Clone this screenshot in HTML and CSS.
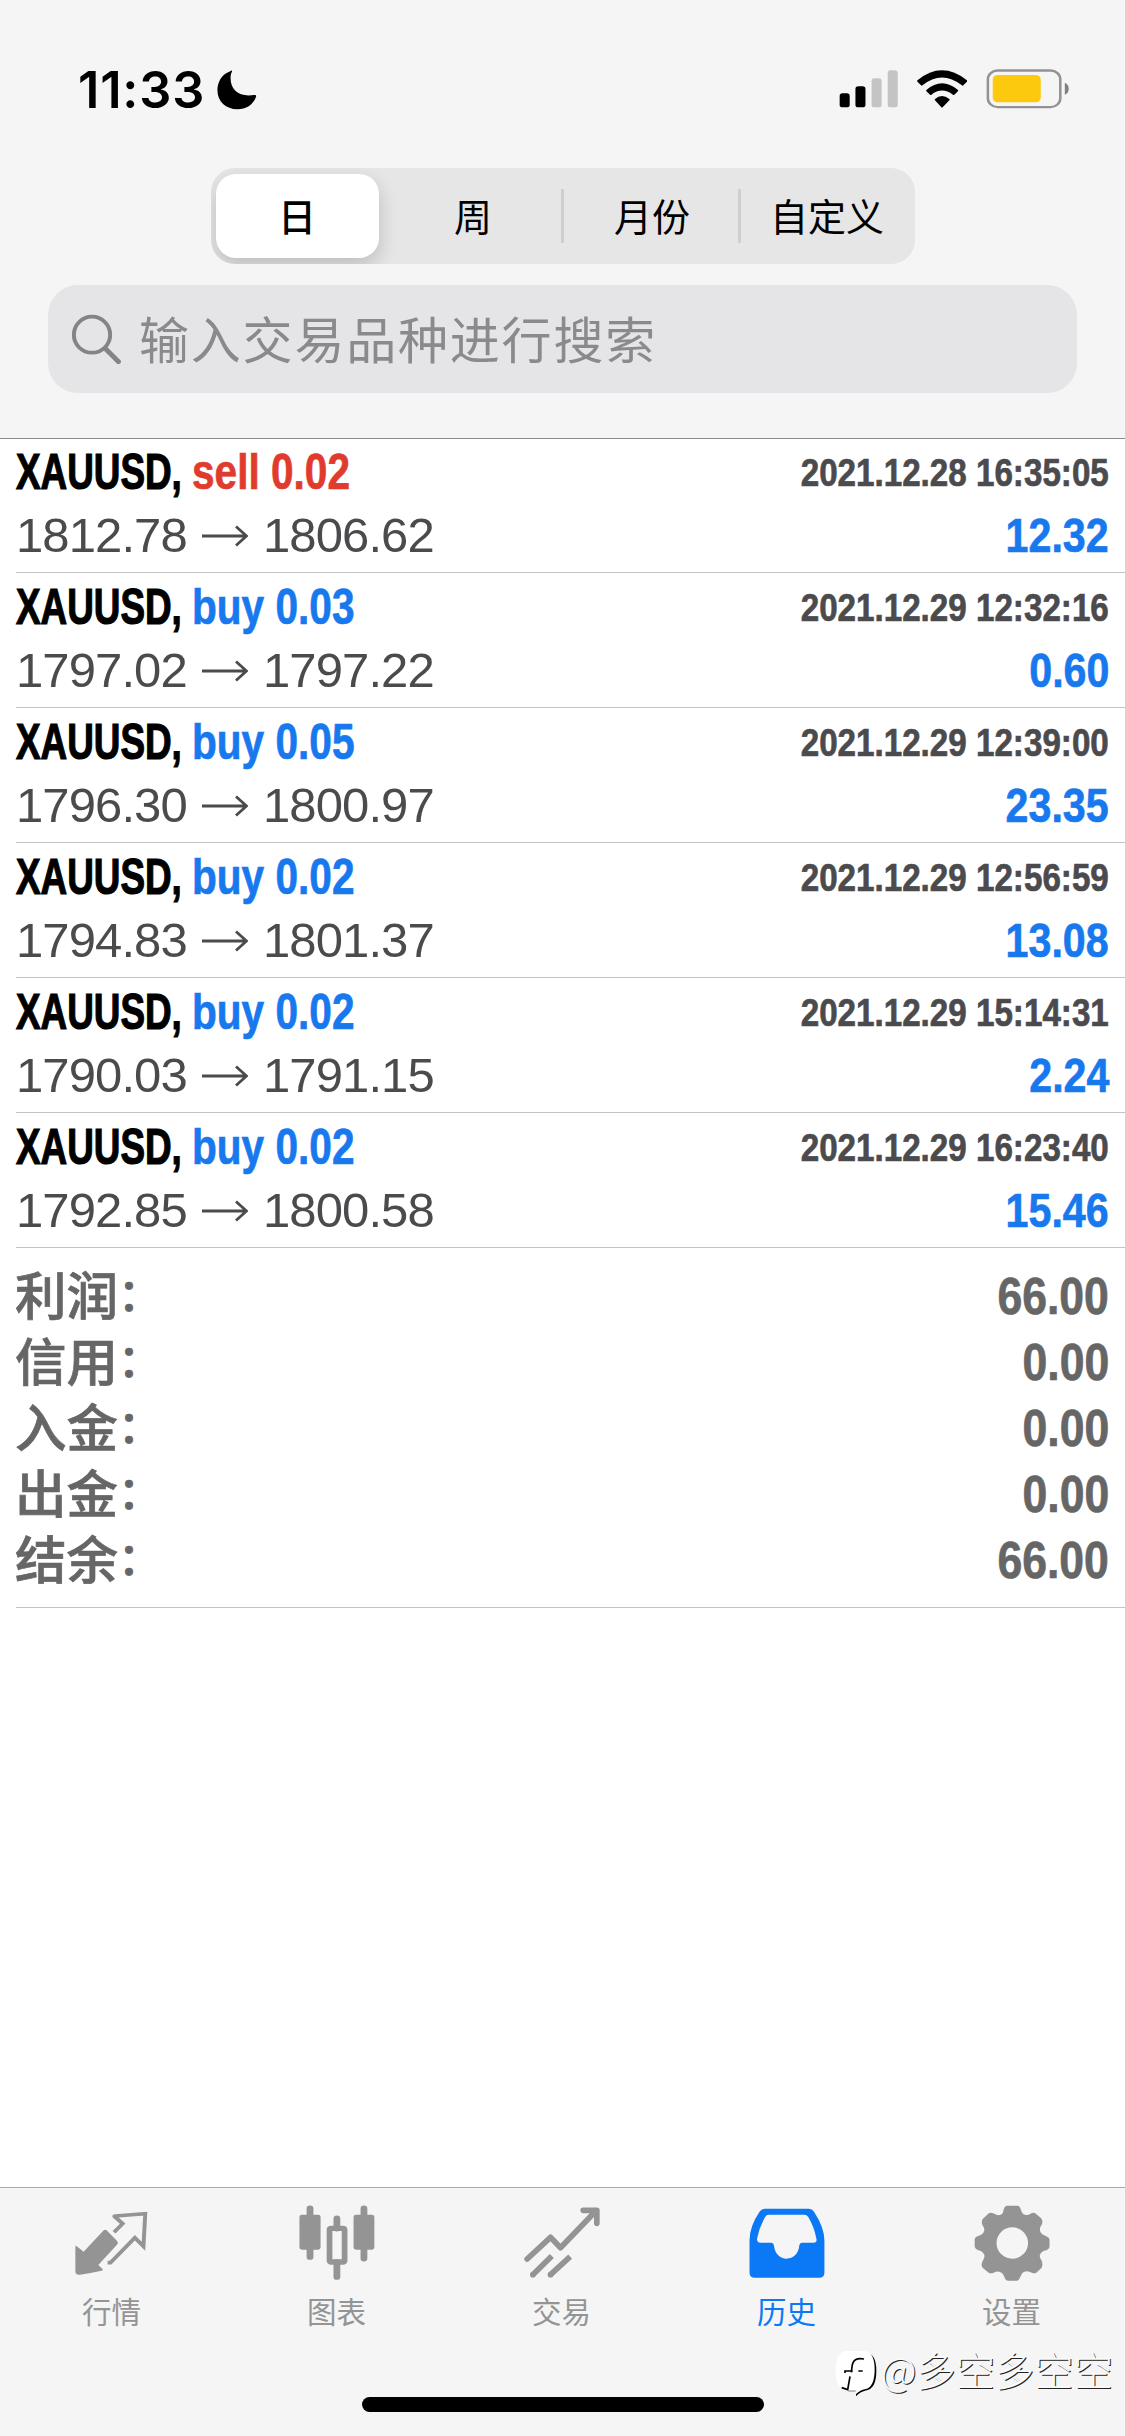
FILE: index.html
```html
<!DOCTYPE html>
<html lang="zh-CN">
<head>
<meta charset="utf-8">
<title>历史</title>
<link rel="stylesheet" href="styles.css">
</head>
<body>
<div class="screen">
  <header class="header">
    <div class="status">
      <div class="clock"><span class="time">11:33</span>
        <svg class="moon" preserveAspectRatio="none" viewBox="604 86 118 126"><path d="M649 90C650 88 646 92 641 94C621 102 608 124 608 150C608 184 632 207 664 207C688 207 708 194 716 171C718 166 716 163 711 164C670 171 645 150 645 114C645 105 646 99 649 94Z"/></svg>
      </div>
      <svg class="status-icons" preserveAspectRatio="none" viewBox="760 80 660 130">
        <rect x="773" y="159" width="28" height="42" rx="8"/><rect x="817" y="138" width="28" height="63" rx="8"/>
        <rect x="862" y="114" width="28" height="87" rx="8" fill="#c4c4c4"/><rect x="907" y="90" width="28" height="111" rx="8" fill="#c4c4c4"/>
        <path d="M990 120Q1058 60 1128 120Q1129 122 1128 124L1118 135Q1116 137 1114 135Q1058 88 1004 135Q1002 137 1000 135L990 124Q988 122 990 120Z"/>
        <path d="M1015 149Q1058 109 1103 149Q1105 151 1103 153L1093 163Q1091 165 1089 163Q1058 138 1029 163Q1027 165 1025 163L1015 153Q1013 151 1015 149Z"/>
        <path d="M1039 176Q1058 158 1079 176Q1081 178 1079 180L1061 200Q1058 203 1056 200L1039 180Q1037 178 1039 176Z"/>
        <rect x="1186.500" y="90.500" width="202" height="110" rx="27" fill="none" stroke="#929292" stroke-width="7"/>
        <rect x="1200" y="104" width="134" height="82" rx="14" fill="#fdc90e"/>
        <path d="M1401 127Q1412 132 1412 145Q1412 158 1401 163Z" fill="#808080"/>
      </svg>
    </div>
    <div class="segments">
      <div class="segment selected">日</div><div class="segment">周</div><div class="segment divided month">月份</div><div class="segment divided custom">自定义</div>
    </div>
    <div class="search">
      <svg class="glass" preserveAspectRatio="none" viewBox="198 822 142 152" fill="none" stroke="#848486"><ellipse cx="256.500" cy="884" rx="50.500" ry="54" stroke-width="11"/><path d="M293 925L330 965" stroke-width="14" stroke-linecap="round"/></svg>
      <span>输入交易品种进行搜索</span>
    </div>
  </header>

  <main class="content">
    <div class="deal">
      <div class="line"><span class="symbol">XAUUSD,</span><span class="side sell">sell 0.02</span><span class="date">2021.12.28 16:35:05</span></div>
      <div class="line"><span class="price">1812.78</span><svg class="arrow" viewBox="0 0 46 22"><path d="M0 11H44M34 1.500L44.500 11L34 20.500"/></svg><span class="price">1806.62</span><span class="profit">12.32</span></div>
    </div>
    <div class="deal">
      <div class="line"><span class="symbol">XAUUSD,</span><span class="side">buy 0.03</span><span class="date">2021.12.29 12:32:16</span></div>
      <div class="line"><span class="price">1797.02</span><svg class="arrow" viewBox="0 0 46 22"><path d="M0 11H44M34 1.500L44.500 11L34 20.500"/></svg><span class="price">1797.22</span><span class="profit">0.60</span></div>
    </div>
    <div class="deal">
      <div class="line"><span class="symbol">XAUUSD,</span><span class="side">buy 0.05</span><span class="date">2021.12.29 12:39:00</span></div>
      <div class="line"><span class="price">1796.30</span><svg class="arrow" viewBox="0 0 46 22"><path d="M0 11H44M34 1.500L44.500 11L34 20.500"/></svg><span class="price">1800.97</span><span class="profit">23.35</span></div>
    </div>
    <div class="deal">
      <div class="line"><span class="symbol">XAUUSD,</span><span class="side">buy 0.02</span><span class="date">2021.12.29 12:56:59</span></div>
      <div class="line"><span class="price">1794.83</span><svg class="arrow" viewBox="0 0 46 22"><path d="M0 11H44M34 1.500L44.500 11L34 20.500"/></svg><span class="price">1801.37</span><span class="profit">13.08</span></div>
    </div>
    <div class="deal">
      <div class="line"><span class="symbol">XAUUSD,</span><span class="side">buy 0.02</span><span class="date">2021.12.29 15:14:31</span></div>
      <div class="line"><span class="price">1790.03</span><svg class="arrow" viewBox="0 0 46 22"><path d="M0 11H44M34 1.500L44.500 11L34 20.500"/></svg><span class="price">1791.15</span><span class="profit">2.24</span></div>
    </div>
    <div class="deal">
      <div class="line"><span class="symbol">XAUUSD,</span><span class="side">buy 0.02</span><span class="date">2021.12.29 16:23:40</span></div>
      <div class="line"><span class="price">1792.85</span><svg class="arrow" viewBox="0 0 46 22"><path d="M0 11H44M34 1.500L44.500 11L34 20.500"/></svg><span class="price">1800.58</span><span class="profit">15.46</span></div>
    </div>
    <div class="summary">
      <div class="total"><span>利润<span class="colon">：</span></span><span class="amount">66.00</span></div>
      <div class="total"><span>信用<span class="colon">：</span></span><span class="amount">0.00</span></div>
      <div class="total"><span>入金<span class="colon">：</span></span><span class="amount">0.00</span></div>
      <div class="total"><span>出金<span class="colon">：</span></span><span class="amount">0.00</span></div>
      <div class="total"><span>结余<span class="colon">：</span></span><span class="amount">66.00</span></div>
    </div>
  </main>

  <nav class="tabs">
    <div class="tab-row">
      <div class="tab">
        <svg preserveAspectRatio="none" viewBox="194 100 240 240"><path d="M209 231Q209 226 213 230L232 246L286 184Q291 178 296 182L325 213Q330 219 325 225L273 286L284 297Q288 301 282 303Q248 311 222 315Q209 317 209 304Z"/><path d="M317 188L341 162L318 140Q317 139 320 139L404 132L399 230L375 204L307 279H299" fill="none" stroke="currentColor" stroke-width="11"/></svg>
        <span>行情</span>
      </div>
      <div class="tab">
        <svg preserveAspectRatio="none" viewBox="821.6 100 240 240"><path d="M863.500 117V261M1014 117V266M938.500 147V176M938.500 278V321" stroke="currentColor" stroke-width="19" stroke-linecap="round"/><rect x="834" y="135" width="59" height="105" rx="7"/><rect x="985" y="135" width="58" height="105" rx="7"/><rect x="918" y="176" width="42" height="101" rx="4" fill="none" stroke="currentColor" stroke-width="16"/></svg>
        <span>图表</span>
      </div>
      <div class="tab">
        <svg preserveAspectRatio="none" viewBox="58.500 40 258 240"><g fill="none" stroke="currentColor" stroke-width="17" stroke-linejoin="round"><path d="M80 208L150 143L180 174L286 64M248 62H289V101" stroke-linecap="round"/><path d="M97 255L154 199M150 255L209 201"/></g><circle cx="97" cy="255" r="8.500"/><circle cx="150" cy="255" r="8.500"/></svg>
        <span>交易</span>
      </div>
      <div class="tab active">
        <svg preserveAspectRatio="none" viewBox="506.400 100 240 240"><path fill-rule="evenodd" d="M562 117H685Q694 117 699 126Q728 174 728 212V309Q728 324 713 324H534Q519 324 519 309V212Q519 170 547 126Q553 117 562 117ZM573 135Q566 135 563 141Q546 173 540 207Q539 219 550 219H580Q586 219 587 227C590 254 605 267 622 267C642 267 656 252 658 227Q659 219 665 219H698Q707 219 706 209Q700 173 683 142Q679 135 672 135Z"/></svg>
        <span>历史</span>
      </div>
      <div class="tab">
        <svg preserveAspectRatio="none" viewBox="1134 100 240 240"><path fill-rule="evenodd" d="M1236 108H1266Q1272 108 1274 114L1278 126Q1281 134 1289 136Q1297 137 1303 132Q1309 127 1315 130L1332 145Q1338 152 1335 163L1330 173Q1328 181 1331 188Q1334 195 1344 198Q1356 203 1356 210V230Q1356 238 1347 242L1339 244Q1331 249 1329 256Q1327 263 1334 273Q1338 284 1334 294L1319 309Q1312 313 1303 308Q1294 303 1286 306Q1279 308 1276 318L1271 329Q1269 333 1264 333H1240Q1235 333 1232 327L1227 315Q1224 307 1215 306Q1207 305 1200 309Q1193 313 1186 309L1170 295Q1164 288 1168 278L1173 266Q1177 256 1170 249Q1167 244 1158 242Q1147 237 1147 229V210Q1147 202 1157 199L1165 195Q1173 191 1174 182Q1174 174 1169 167Q1165 158 1169 149L1184 133Q1191 126 1199 131Q1208 138 1217 136Q1226 134 1227 124Q1229 111 1236 108ZM1252 173A44 47 0 1 0 1252 267A44 47 0 1 0 1252 173Z"/></svg>
        <span>设置</span>
      </div>
    </div>
    <div class="home"></div>
  </nav>
  <div class="watermark">
    <svg viewBox="30 35 125 145"><path d="M60 46H125Q154 50 154 100Q154 150 128 158Q106 162 93 177V162H70Z"/><path d="M62 41H118Q149 44 149 95Q149 145 126 154Q104 158 92 171V160H62Q32 155 32 100Q32 45 62 41Z" fill="#fff"/><path d="M117 65Q84 58 81 88L79 105M60 107V101H83M100 101H113M75 117L68 157L50 151" fill="none" stroke="#000" stroke-width="5"/></svg>
    <span>@多空多空空</span>
  </div>
</div>
</body>
</html>
```
FILE: styles.css
```css
* { box-sizing: border-box; }

body {
  margin: 0;
  background: #fff;
  font-family: "Liberation Sans", "Noto Sans CJK SC", sans-serif;
}

.screen {
  position: relative;
  display: flex;
  flex-direction: column;
  width: 1125px;
  height: 2436px;
  overflow: hidden;
}

.header {
  height: 439px;
  background: #f5f5f5;
  border-bottom: 1px solid #8c8c8c;
}

.status {
  display: flex;
  justify-content: space-between;
  height: 168px;
  padding: 66.700px 53px 0 78px;
}

.clock { display: flex; height: 50px; }

.time {
  width: 138px;
  font: 600 50.500px/45px Inter, sans-serif;
  letter-spacing: 0.8px;
}

.moon { width: 42px; height: 42px; margin-top: 2px; }

.status-icons { width: 236.6px; height: 43.3px; }

.segments {
  display: grid;
  grid-template-columns: 175px 175px 177px 1fr;
  width: 704px;
  height: 96px;
  margin: 0 auto;
  border-radius: 24px;
  background: #e6e6e6;
  overflow: hidden;
}

.segment {
  display: flex;
  align-items: center;
  justify-content: center;
  padding-bottom: 3px;
  font: 400 38px/60px "Noto Sans CJK SC", sans-serif;
}

.divided {
  background: linear-gradient(#cfcfcf, #cfcfcf) left center / 3px 54px no-repeat;
}

.month { padding-left: 6px; }
.custom { padding-left: 2px; }

.selected {
  width: 163px;
  height: 84px;
  margin: 6px 0 0 5px;
  border-radius: 20px;
  background: #fff;
  box-shadow: 0 8px 20px rgba(0, 0, 0, 0.18);
  font-weight: 500;
}

.search {
  display: flex;
  align-items: center;
  gap: 17px;
  width: 1029px;
  height: 108px;
  margin: 21px auto 0;
  padding-left: 23px;
  border-radius: 30px;
  background: #e5e5e7;
  color: #8a8a8c;
  font: 400 50px/70px "Noto Sans CJK SC", sans-serif;
  letter-spacing: 1.800px;
}

.search span { margin-bottom: 4px; }

.glass { width: 51px; height: 50.7px; }

.content { height: 1748px; padding-left: 16px; background: #fff; }

.deal {
  height: 135px;
  padding-top: 3px;
  border-bottom: 1px solid #c3c3c5;
}

.deal:first-child { height: 134px; padding-top: 2px; }

.line {
  display: flex;
  align-items: center;
  height: 63px;
  padding-right: 16px;
  line-height: 63px;
  white-space: nowrap;
}

.symbol,
.side,
.date,
.profit,
.amount {
  -webkit-text-stroke: 0.7px currentColor;
}

.symbol {
  width: 176px;
  font-size: 50px;
  font-weight: 700;
  -webkit-text-stroke-width: 1.2px;
  transform: scaleX(0.737);
  transform-origin: left;
}

.side {
  color: #1878ee;
  font-size: 50px;
  font-weight: 700;
  transform: scaleX(0.812);
  transform-origin: left;
}

.sell { color: #e03b2d; }

.date {
  margin-left: auto;
  color: #4b4b4e;
  font-size: 39.500px;
  font-weight: 700;
  transform: scaleX(0.84);
  transform-origin: right;
}

.price {
  width: 170px;
  color: #4b4b4e;
  font-size: 49px;
  letter-spacing: -0.9px;
}

.arrow {
  width: 46px;
  height: 22px;
  margin: 0 15px 0 16px;
  fill: none;
  stroke: #4b4b4e;
  stroke-width: 2.800;
}

.profit {
  margin-left: auto;
  color: #1878ee;
  font-size: 49px;
  font-weight: 700;
  transform: scaleX(0.84);
  transform-origin: right;
}

.summary {
  height: 360px;
  padding: 12px 16px 0 0;
  border-bottom: 1px solid #c3c3c5;
}

.total {
  display: flex;
  justify-content: space-between;
  height: 66px;
  margin-left: -1px;
  color: #666;
  font: 500 51.500px/65px "Noto Sans CJK SC", sans-serif;
  -webkit-text-stroke: 0.7px currentColor;
}

.colon { position: relative; top: -4px; font-size: 44px; line-height: 1; }

.amount {
  font: 700 51.500px/73px "Liberation Sans", sans-serif;
  transform: scaleX(0.865);
  transform-origin: right;
}

.tabs {
  display: flex;
  flex-direction: column;
  align-items: center;
  height: 249px;
  background: #f5f5f5;
  border-top: 1px solid #aaa;
}

.tab-row {
  display: grid;
  grid-template-columns: repeat(5, 1fr);
  width: 100%;
  height: 209px;
  padding-top: 15.300px;
}

.tab {
  display: flex;
  flex-direction: column;
  align-items: center;
  color: #949494;
  font: 400 29.500px/40px "Noto Sans CJK SC", sans-serif;
}

.tab svg { width: 86px; height: 80px; margin-bottom: 6.500px; fill: currentColor; }
.tab span { margin-right: 2px; }
.active { color: #0b78f5; }

.home { width: 402px; height: 15px; border-radius: 8px; background: #000; }

.watermark {
  position: absolute;
  left: 835px;
  top: 2349px;
  display: flex;
  align-items: center;
  color: #fafafa;
  font: 300 39.300px/50px "Noto Sans CJK SC", sans-serif;
  text-shadow: 1px 1px 0 #222;
}

.watermark span { margin-top: -8px; }
.watermark svg { width: 41.700px; height: 48.300px; margin-right: 4px; }
```
